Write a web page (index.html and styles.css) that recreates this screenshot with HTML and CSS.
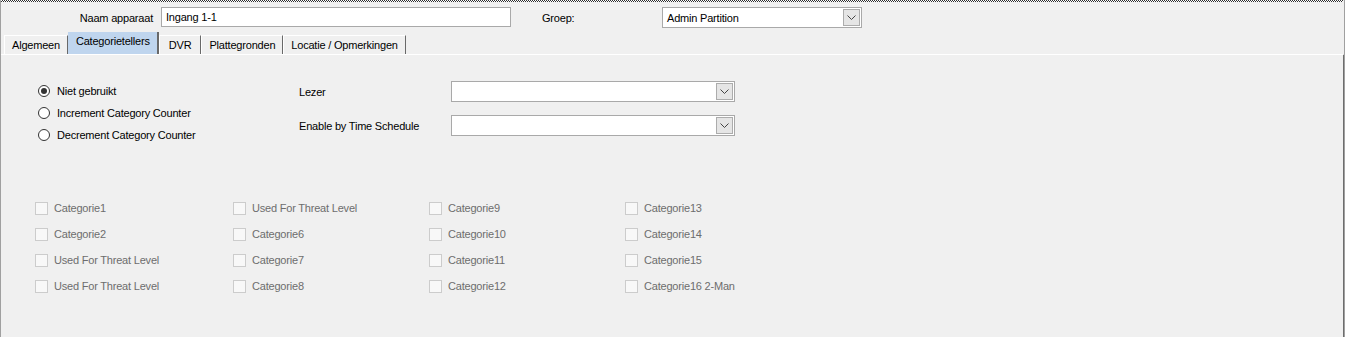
FILE: index.html
```html
<!DOCTYPE html>
<html lang="nl">
<head>
<meta charset="UTF-8">
<title>Apparaat - Categorietellers</title>
<link rel="stylesheet" href="styles.css">
</head>
<body>
<div class="window">
  <div class="dots"></div>

  <div class="header">
    <label class="hdrLabel">Naam apparaat</label>
    <div class="textbox name">Ingang 1-1</div>
    <label class="groepLabel">Groep:</label>
    <div class="combo groep">
      <span class="comboText">Admin Partition</span>
      <span class="comboBtn"><svg width="9" height="5" viewBox="0 0 9 5"><path d="M0.5 0.5 L4.5 4.5 L8.5 0.5" fill="none" stroke="#444" stroke-width="1"/></svg></span>
    </div>
  </div>

  <div class="tabs">
    <div class="tab">Algemeen</div>
    <div class="tab active">Categorietellers</div>
    <div class="tab dvr">DVR</div>
    <div class="tab">Plattegronden</div>
    <div class="tab">Locatie / Opmerkingen</div>
  </div>

  <div class="panel">
    <div class="upper">
      <div class="radios">
        <div class="radioRow"><span class="radio checked"></span>Niet gebruikt</div>
        <div class="radioRow"><span class="radio"></span>Increment Category Counter</div>
        <div class="radioRow"><span class="radio"></span>Decrement Category Counter</div>
      </div>
      <div class="fields">
        <div class="fieldRow">
          <span class="fieldLabel">Lezer</span>
          <div class="combo wide">
            <span class="comboText"></span>
            <span class="comboBtn"><svg width="9" height="5" viewBox="0 0 9 5"><path d="M0.5 0.5 L4.5 4.5 L8.5 0.5" fill="none" stroke="#444" stroke-width="1"/></svg></span>
          </div>
        </div>
        <div class="fieldRow">
          <span class="fieldLabel">Enable by Time Schedule</span>
          <div class="combo wide">
            <span class="comboText"></span>
            <span class="comboBtn"><svg width="9" height="5" viewBox="0 0 9 5"><path d="M0.5 0.5 L4.5 4.5 L8.5 0.5" fill="none" stroke="#444" stroke-width="1"/></svg></span>
          </div>
        </div>
      </div>
    </div>

    <div class="checks">
      <div class="check"><span class="box"></span>Categorie1</div>
      <div class="check"><span class="box"></span>Used For Threat Level</div>
      <div class="check"><span class="box"></span>Categorie9</div>
      <div class="check"><span class="box"></span>Categorie13</div>

      <div class="check"><span class="box"></span>Categorie2</div>
      <div class="check"><span class="box"></span>Categorie6</div>
      <div class="check"><span class="box"></span>Categorie10</div>
      <div class="check"><span class="box"></span>Categorie14</div>

      <div class="check"><span class="box"></span>Used For Threat Level</div>
      <div class="check"><span class="box"></span>Categorie7</div>
      <div class="check"><span class="box"></span>Categorie11</div>
      <div class="check"><span class="box"></span>Categorie15</div>

      <div class="check"><span class="box"></span>Used For Threat Level</div>
      <div class="check"><span class="box"></span>Categorie8</div>
      <div class="check"><span class="box"></span>Categorie12</div>
      <div class="check"><span class="box"></span>Categorie16 2-Man</div>
    </div>
  </div>
</div>
</body>
</html>
```

FILE: styles.css
```css
body {
    margin: 0;
    background-color: #f0f0f0;
    font-family: "Liberation Sans", Arial, sans-serif;
    font-size: 11px; letter-spacing: -0.2px;
    color: #000;
}

.window {
    width: 1345px; height: 337px;
    box-sizing: border-box;
    display: flex; flex-direction: column;
    border-left: 1px solid #a0a0a0;
    border-right: 1px solid #a0a0a0;
    overflow: hidden;
}

/* checkered line on top of the form */
.dots {
    height: 2px; margin-right: 1px;
    background: repeating-conic-gradient(#303030 0 25%, #ffffff 0 50%) 0 0 / 2px 2px;
}

.header {
    height: 30px;
    display: flex; align-items: center;
}
.hdrLabel { width: 152px; text-align: right; margin-right: 8px; padding-top: 1px; }
.groepLabel { width: 120px; margin-left: 31px; padding-top: 1px; }

.textbox {
    height: 20px; box-sizing: border-box;
    background: #fff; border: 1px solid #a9a9a9;
    padding: 1px 4px 0; line-height: 17px;
}
.name { width: 350px; }

.combo {
    height: 21px; box-sizing: border-box;
    background: #fff; border: 1px solid #a9a9a9;
    display: flex; align-items: center;
    padding: 0 1px 0 4px;
}
.combo .comboText { flex: 1; padding-top: 1px; }
.groep { width: 200px; }
.wide { width: 284px; }

.comboBtn {
    width: 15px; height: 15px;
    background: #e5e5e5; border: 1px solid #acacac;
    display: flex; align-items: center; justify-content: center;
}

/* tabs */
.tabs {
    height: 22px;
    display: flex; align-items: flex-end;
    padding-left: 3px;
}
.tab {
    height: 19px; box-sizing: border-box;
    padding: 0 7px;
    border-top: 1px solid #fff; border-left: 1px solid #fff;
    border-right: 1px solid #696969;
    line-height: 19px;
    background: #f0f0f0;
}
.tab.dvr { padding: 0 9px; }
.tab.active {
    height: 22px; padding: 0 7px 0 8px;
    border: none; border-right: 2px solid #696969;
    background: #bfd5ee;
    line-height: 19px;
}

.panel {
    flex: 1;
    border-top: 1px solid #fff;
    border-right: 2px solid #6d6d6d;
    margin-right: -1px;
}

.upper {
    display: flex;
    padding: 25px 0 0 37px;
}
.radios { width: 261px; }
.radioRow {
    height: 22px;
    display: flex; align-items: center;
}
.radio {
    width: 12px; height: 12px; box-sizing: border-box;
    border: 1px solid #333; border-radius: 50%;
    background: #fff; margin-right: 7px;
    display: flex; align-items: center; justify-content: center;
}
.radio.checked::after {
    content: ""; width: 6px; height: 6px;
    border-radius: 50%; background: #333;
}

.fields {
    display: flex; flex-direction: column; gap: 13px;
    margin-top: 1px;
}
.fieldRow { display: flex; align-items: center; }
.fieldLabel { width: 152px; }

.checks {
    display: grid;
    grid-template-columns: 198px 196px 196px auto;
    grid-auto-rows: 26px;
    margin-top: 49px; padding-left: 34px;
}
.check {
    display: flex; align-items: center;
    color: #6d6d6d;
}
.box {
    width: 13px; height: 13px; box-sizing: border-box;
    border: 1px solid #cccccc; background: #f8f8f8;
    margin-right: 6px;
}
```
